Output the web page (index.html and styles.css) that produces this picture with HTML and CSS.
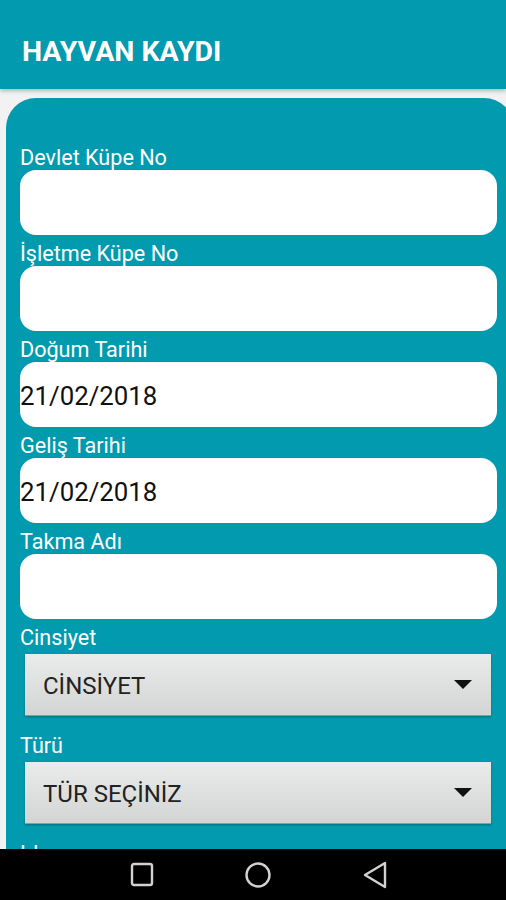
FILE: index.html
```html
<!DOCTYPE html>
<html lang="tr">

<head>
    <meta charset="UTF-8">
    <meta name="viewport" content="width=device-width, initial-scale=1.0">
    <title>Hayvan Kaydı</title>
    <link rel="stylesheet" href="styles.css">
</head>

<body>
    <div class="screen">
        <div class="toolbar">HAYVAN KAYDI</div>

        <div class="content">
            <div class="card">
                <div class="label">Devlet Küpe No</div>
                <div class="field"></div>

                <div class="label">İşletme Küpe No</div>
                <div class="field"></div>

                <div class="label">Doğum Tarihi</div>
                <div class="field">21/02/2018</div>

                <div class="label">Geliş Tarihi</div>
                <div class="field">21/02/2018</div>

                <div class="label">Takma Adı</div>
                <div class="field"></div>

                <div class="label">Cinsiyet</div>
                <div class="spinner">
                    <span>CİNSİYET</span>
                    <svg class="arrow" width="18" height="9" viewBox="0 0 18 9">
                        <polygon points="0,0 18,0 9,9" fill="#111" />
                    </svg>
                </div>

                <div class="label">Türü</div>
                <div class="spinner">
                    <span>TÜR SEÇİNİZ</span>
                    <svg class="arrow" width="18" height="9" viewBox="0 0 18 9">
                        <polygon points="0,0 18,0 9,9" fill="#111" />
                    </svg>
                </div>

                <div class="label">Irkı</div>
                <div class="spinner">
                    <span>IRK SEÇİNİZ</span>
                </div>
            </div>
        </div>

        <div class="navbar">
            <svg width="24" height="25" viewBox="0 0 24 25">
                <rect x="2" y="2" width="20" height="21" rx="2" fill="none" stroke="#d2d2d2" stroke-width="2.4" />
            </svg>
            <svg width="28" height="28" viewBox="0 0 28 28">
                <circle cx="14" cy="14" r="11.5" fill="none" stroke="#d2d2d2" stroke-width="2.4" />
            </svg>
            <svg width="26" height="28" viewBox="0 0 26 28">
                <path d="M23 2 L3 14 L23 26 Z" fill="none" stroke="#d2d2d2" stroke-width="2.4" stroke-linejoin="round" />
            </svg>
        </div>
    </div>
</body>

</html>
```

FILE: styles.css
```css
html,
body {
    margin: 0;
    padding: 0;
}

body {
    font-family: Roboto, "Noto Sans", sans-serif;
    background-color: #f2f2f2;
}

.screen {
    width: 506px;
    height: 900px;
    display: flex;
    flex-direction: column;
    overflow: hidden;
}

.toolbar {
    height: 51px;
    flex-shrink: 0;
    padding: 38px 0 0 22px;
    background-color: #029aae;
    color: #fff;
    font-size: 28.5px;
    font-weight: bold;
    line-height: 28px;
    box-shadow: 0 2px 4px rgba(0, 0, 0, 0.25);
    position: relative;
    z-index: 1;
}

.content {
    flex: 1;
    overflow: hidden;
    padding: 9px 0 0 6px;
}

.card {
    margin-right: -8px;
    padding: 41px 17px 0 14px;
    background-color: #029aae;
    border-radius: 30px 30px 0 0;
}

.label {
    height: 24px;
    padding-top: 7px;
    line-height: 24px;
    font-size: 21.6px;
    color: #fff;
}

.field {
    height: 61px;
    padding-top: 4px;
    line-height: 61px;
    background-color: #fff;
    border-radius: 16px;
    font-size: 25.8px;
    color: #111;
}

.spinner {
    height: 59px;
    margin: 4px 6px 11px 5px;
    padding: 2px 19px 0 18px;
    display: flex;
    align-items: center;
    justify-content: space-between;
    background: linear-gradient(#eaecec, #d3d5d5);
    border-bottom: 1px solid #8f9a9c;
    box-shadow: 0 1px 2px rgba(0, 0, 0, 0.3);
    font-size: 24px;
    color: #222;
}

.arrow {
    margin-top: -2px;
}

.navbar {
    height: 51px;
    flex-shrink: 0;
    background-color: #000;
    display: flex;
    align-items: center;
    padding-left: 130px;
    gap: 90px;
}
```
